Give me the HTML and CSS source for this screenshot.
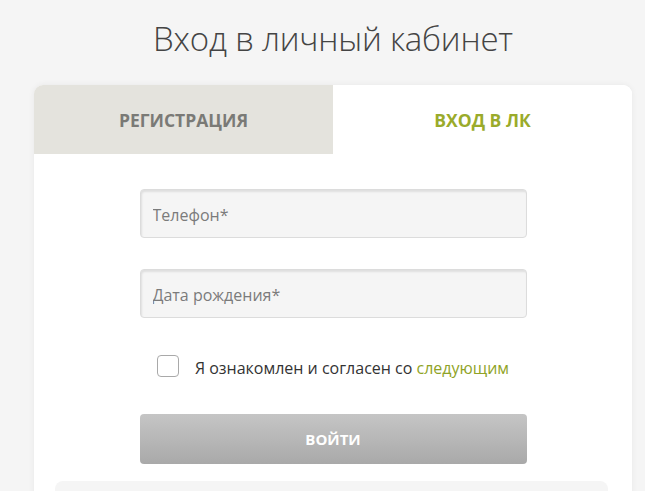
FILE: index.html
```html
<!DOCTYPE html>
<html lang="ru">
<head>
<meta charset="utf-8">
<title>Вход в личный кабинет</title>
<link rel="stylesheet" href="styles.css">
</head>
<body>
<div class="page">
  <h1 class="title">Вход в личный кабинет</h1>
  <div class="card">
    <div class="tabs">
      <div class="tab tab-inactive">РЕГИСТРАЦИЯ</div>
      <div class="tab tab-active">ВХОД В ЛК</div>
    </div>
    <form class="form">
      <input class="field" type="text" placeholder="Телефон*">
      <input class="field" type="text" placeholder="Дата рождения*">
      <label class="agree">
        <span class="checkbox"></span>
        <span class="agree-text">Я ознакомлен и согласен со <a class="link" href="#">следующим</a></span>
      </label>
      <button class="submit" type="button">ВОЙТИ</button>
      <div class="more"></div>
    </form>
  </div>
</div>
</body>
</html>
```

FILE: styles.css
```css
* { box-sizing: border-box; }
html, body { margin: 0; padding: 0; }
body {
  background: #f5f5f5;
  font-family: "Open Sans", "Noto Sans", "DejaVu Sans", sans-serif;
  color: #333;
  overflow: hidden;
}
.page {
  width: 598px;
  margin-left: 34px;
}
.title {
  margin: 0;
  padding-top: 16px;
  height: 85px;
  line-height: 45px;
  text-align: center;
  font-size: 33px;
  font-weight: 300;
  color: #444;
  letter-spacing: -0.2px;
}
.card {
  background: #fff;
  border-radius: 9px 9px 0 0;
  box-shadow: 0 0 6px rgba(0,0,0,0.06);
  height: 420px;
}
.tabs {
  display: grid;
  grid-template-columns: 299px 299px;
  height: 69px;
}
.tab {
  display: flex;
  align-items: center;
  justify-content: center;
  font-size: 17.5px;
  font-weight: 700;
}
.tab-inactive {
  background: #e4e3dd;
  color: #7a7a76;
  border-radius: 9px 0 0 0;
}
.tab-active {
  background: #fff;
  color: #9aab2b;
  border-radius: 0 9px 0 0;
}
.form {
  display: flex;
  flex-direction: column;
  align-items: center;
  padding-top: 35px;
}
.field {
  width: 387px;
  height: 49px;
  margin-bottom: 31px;
  background: #f5f5f5;
  border: 1px solid #dcdcdc;
  border-radius: 4px;
  box-shadow: inset 1px 2px 2px rgba(0,0,0,0.09);
  padding: 2px 12px 0;
  font-family: inherit;
  font-size: 16px;
  color: #777;
  outline: none;
}
.field::placeholder { color: #7b7b7b; }
.agree {
  display: flex;
  align-items: center;
  gap: 16px;
  height: 22px;
  margin-top: 6px;
  font-size: 16px;
  color: #333;
}
.agree-text {
  padding-top: 3px;
}
.checkbox {
  flex: none;
  width: 22px;
  height: 22px;
  border: 1px solid #a9a9a9;
  border-radius: 4px;
  background: #fff;
}
.link {
  color: #8fa326;
  text-decoration: none;
}
.submit {
  width: 387px;
  height: 50px;
  margin-top: 37px;
  border: none;
  border-radius: 4px;
  background: linear-gradient(#c5c5c5, #a9a9a9);
  color: #fff;
  font-family: inherit;
  font-size: 15px;
  font-weight: 700;
}
.more {
  align-self: stretch;
  margin: 17px 24px 0 21px;
  height: 30px;
  background: #f5f5f5;
  border-radius: 8px 8px 0 0;
}
```
